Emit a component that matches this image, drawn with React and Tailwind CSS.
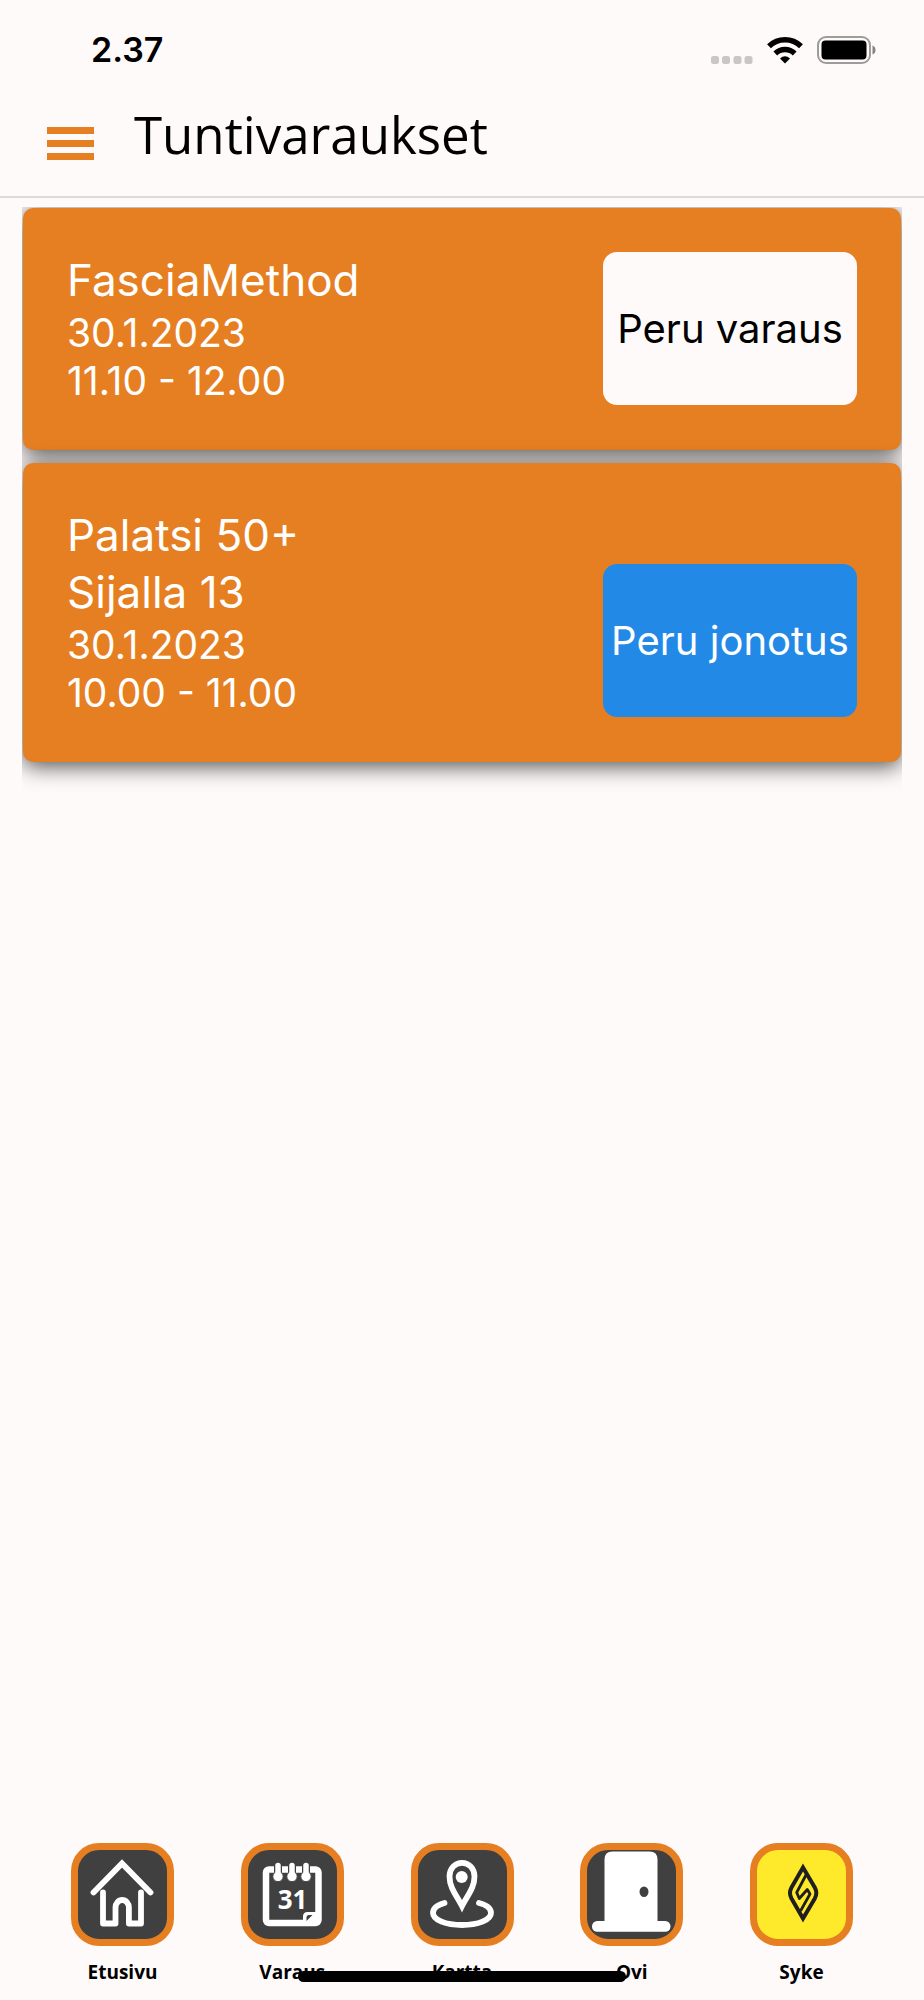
import React from "react";

const bookings = [
  {
    lines: ["FasciaMethod"],
    date: "30.1.2023",
    time: "11.10 - 12.00",
    action: "Peru varaus",
    tone: "bg-[#fffafa] text-black",
  },
  {
    lines: ["Palatsi 50+", "Sijalla 13"],
    date: "30.1.2023",
    time: "10.00 - 11.00",
    action: "Peru jonotus",
    tone: "bg-[#2389e6] text-white",
  },
];

function Glyph({ children }) {
  return (
    <svg viewBox="7 7 89 89" className="block size-full" fill="none" aria-hidden="true">
      {children}
    </svg>
  );
}

const HomeGlyph = () => (
  <Glyph>
    <g stroke="#fff" strokeWidth="5.8" strokeLinecap="round" strokeLinejoin="miter">
      <path d="M22.500 49.500 51 20.500 79.500 49.500" />
      <path strokeLinejoin="round" d="M32 49.500v31h12.500V64.500a6.700 7.500 0 0 1 13.400 0V80.500H70V49.500" />
    </g>
  </Glyph>
);

const CalendarGlyph = () => (
  <Glyph>
    <rect x="25" y="26.500" width="52.500" height="53.500" rx="3" stroke="#fff" strokeWidth="6.500" />
    <path d="M62 80v-6.500q0-4.500 4.500-4.500H78v11z" fill="#fff" />
    <path d="M65.500 77v-2.500q0-2.500 2.500-2.500h3.500L65.500 78z" fill="#404040" />
    {[37, 51, 65].map((x) => (
      <g key={x}>
        <path d={`M${x} 23v10`} stroke="#404040" strokeWidth="8" />
        <circle cx={x} cy="33.500" r="5.200" fill="#fff" stroke="#404040" strokeWidth="1" />
        <path d={`M${x} 22.500v11.500`} stroke="#fff" strokeWidth="5.500" strokeLinecap="round" />
      </g>
    ))}
    <text x="51.500" y="65.500" textAnchor="middle" fill="#fff" fontSize="26" fontWeight="700" fontFamily="'Open Sans', sans-serif">
      31
    </text>
  </Glyph>
);

const MapGlyph = () => (
  <Glyph>
    <g stroke="#fff" strokeWidth="5.800">
      <path d="M51 63C46 53 38.500 45 38.500 33.500 38.500 25.500 44 19.800 51 19.800S63.500 25.500 63.500 33.500C63.500 45 56 53 51 63Z" />
      <path strokeLinecap="round" d="M33.500 60C26 62 22 66 22 70 22 77 35 82 51 82s29-5 29-12c0-4-4-8-12-10" />
    </g>
    <circle cx="50.700" cy="34" r="6" fill="#fff" />
  </Glyph>
);

const DoorGlyph = () => (
  <Glyph>
    <path d="M24.500 80V16.500q0-8 8-8h37q8 0 8 8v63.500z" fill="#fff" />
    <rect x="12" y="78" width="78.500" height="10.700" rx="5.300" fill="#fff" />
    <ellipse cx="64" cy="48.700" rx="4.500" ry="5.200" fill="#404040" />
  </Glyph>
);

const PulseGlyph = () => (
  <Glyph>
    <g stroke="#1f1f1f">
      <path strokeWidth="4" d="M53 24.500 41.500 44.500q-3 5.500 0 11L53 75.500 64.800 55.500q3-5.500 0-11Z" />
      <path strokeWidth="2.800" strokeLinejoin="round" d="M56 32 46.700 49.500 49.300 55.500 57.300 46.500 60 51 50.500 68" />
    </g>
  </Glyph>
);

const tabs = [
  { label: "Etusivu", Icon: HomeGlyph, fill: "bg-[#404040]" },
  { label: "Varaus", Icon: CalendarGlyph, fill: "bg-[#404040]" },
  { label: "Kartta", Icon: MapGlyph, fill: "bg-[#404040]" },
  { label: "Ovi", Icon: DoorGlyph, fill: "bg-[#404040]" },
  { label: "Syke", Icon: PulseGlyph, fill: "bg-[#ffe92b]" },
];

function StatusBar() {
  return (
    <div className="flex h-25 items-center justify-between pr-12 pl-[91px]">
      <span className="font-['Inter',sans-serif] text-[34px] leading-none font-semibold">2.37</span>
      <div className="flex items-center gap-3.5">
        <svg width="42" height="28" viewBox="0 0 42 28" fill="#c9c6c6" aria-hidden="true">
          <rect x="0" y="20" width="8" height="8" rx="2.500" />
          <rect x="11" y="20" width="8" height="8" rx="2.500" />
          <rect x="22.500" y="20" width="8" height="8" rx="2.500" />
          <rect x="33.500" y="20" width="8" height="8" rx="2.500" />
        </svg>
        <svg width="36" height="28" viewBox="0 0 36 28" aria-hidden="true">
          <g fill="none" stroke="#000" strokeWidth="5.500">
            <path d="M2 10.200a23 23 0 0 1 32 0" />
            <path d="M8.300 17.500a14 14 0 0 1 19.400 0" />
          </g>
          <path d="M18 27.500 13 22.500q5-4.500 10 0z" />
        </svg>
        <svg width="59" height="28" viewBox="0 0 59 28" aria-hidden="true">
          <rect x="1" y="1" width="52" height="26" rx="8" fill="none" stroke="#9e9b9b" strokeWidth="2" />
          <rect x="4.500" y="4.500" width="45" height="19" rx="4" />
          <path d="M55.500 9.500q3 1 3 4.500t-3 4.500z" fill="#858282" />
        </svg>
      </div>
    </div>
  );
}

function BookingCard({ lines, date, time, action, tone }) {
  return (
    <li className="flex items-end justify-between rounded-[10px] bg-[#e67f22] px-11 pt-11 pb-[45px] text-white shadow-[0_4px_22px_rgba(0,0,0,0.7)]">
      <div>
        <h2 className="text-[44px] leading-[57px]">
          {lines.map((line) => (
            <span key={line} className="block">{line}</span>
          ))}
        </h2>
        <p className="text-[39px] leading-12">{date}</p>
        <p className="text-[39px] leading-12">{time}</p>
      </div>
      <button type="button" className={`h-[153px] w-[254px] rounded-[14px] text-[40px] whitespace-nowrap ${tone}`}>
        {action}
      </button>
    </li>
  );
}

export default function App() {
  return (
    <div className="relative flex min-h-screen flex-col bg-[#fffafa] font-['Inter',sans-serif] text-black">
      <StatusBar />
      <header className="flex h-[98px] items-start gap-10 border-b-2 border-[#dcd9d9] pl-[47px]">
        <button type="button" aria-label="Valikko" className="mt-[27px] flex w-[47px] flex-col gap-1.5">
          <span className="h-[7px] w-full bg-[#e67f22]" />
          <span className="h-[7px] w-full bg-[#e67f22]" />
          <span className="h-[7px] w-full bg-[#e67f22]" />
        </button>
        <h1 className="font-['Open_Sans',sans-serif] text-[51px] leading-[68px]">Tuntivaraukset</h1>
      </header>
      <main className="mt-[9px] grow px-[22px]">
        <ul className="flex flex-col gap-[13px] overflow-hidden px-px pt-px pb-10">
          {bookings.map((b) => (
            <BookingCard key={b.action} {...b} />
          ))}
        </ul>
      </main>
      <nav className="flex justify-between px-[71px] pb-3.5">
        {tabs.map(({ label, Icon, fill }) => (
          <a key={label} href="#" className="flex w-[103px] flex-col items-center gap-3">
            <span className={`size-[103px] overflow-hidden rounded-[28px] border-7 border-[#e67f22] ${fill}`}>
              <Icon />
            </span>
            <span className="font-['Open_Sans',sans-serif] text-[19px] leading-7 font-bold">{label}</span>
          </a>
        ))}
      </nav>
      <div className="absolute bottom-[18px] left-1/2 h-[11px] w-[328px] -translate-x-1/2 rounded-full bg-black" />
    </div>
  );
}
